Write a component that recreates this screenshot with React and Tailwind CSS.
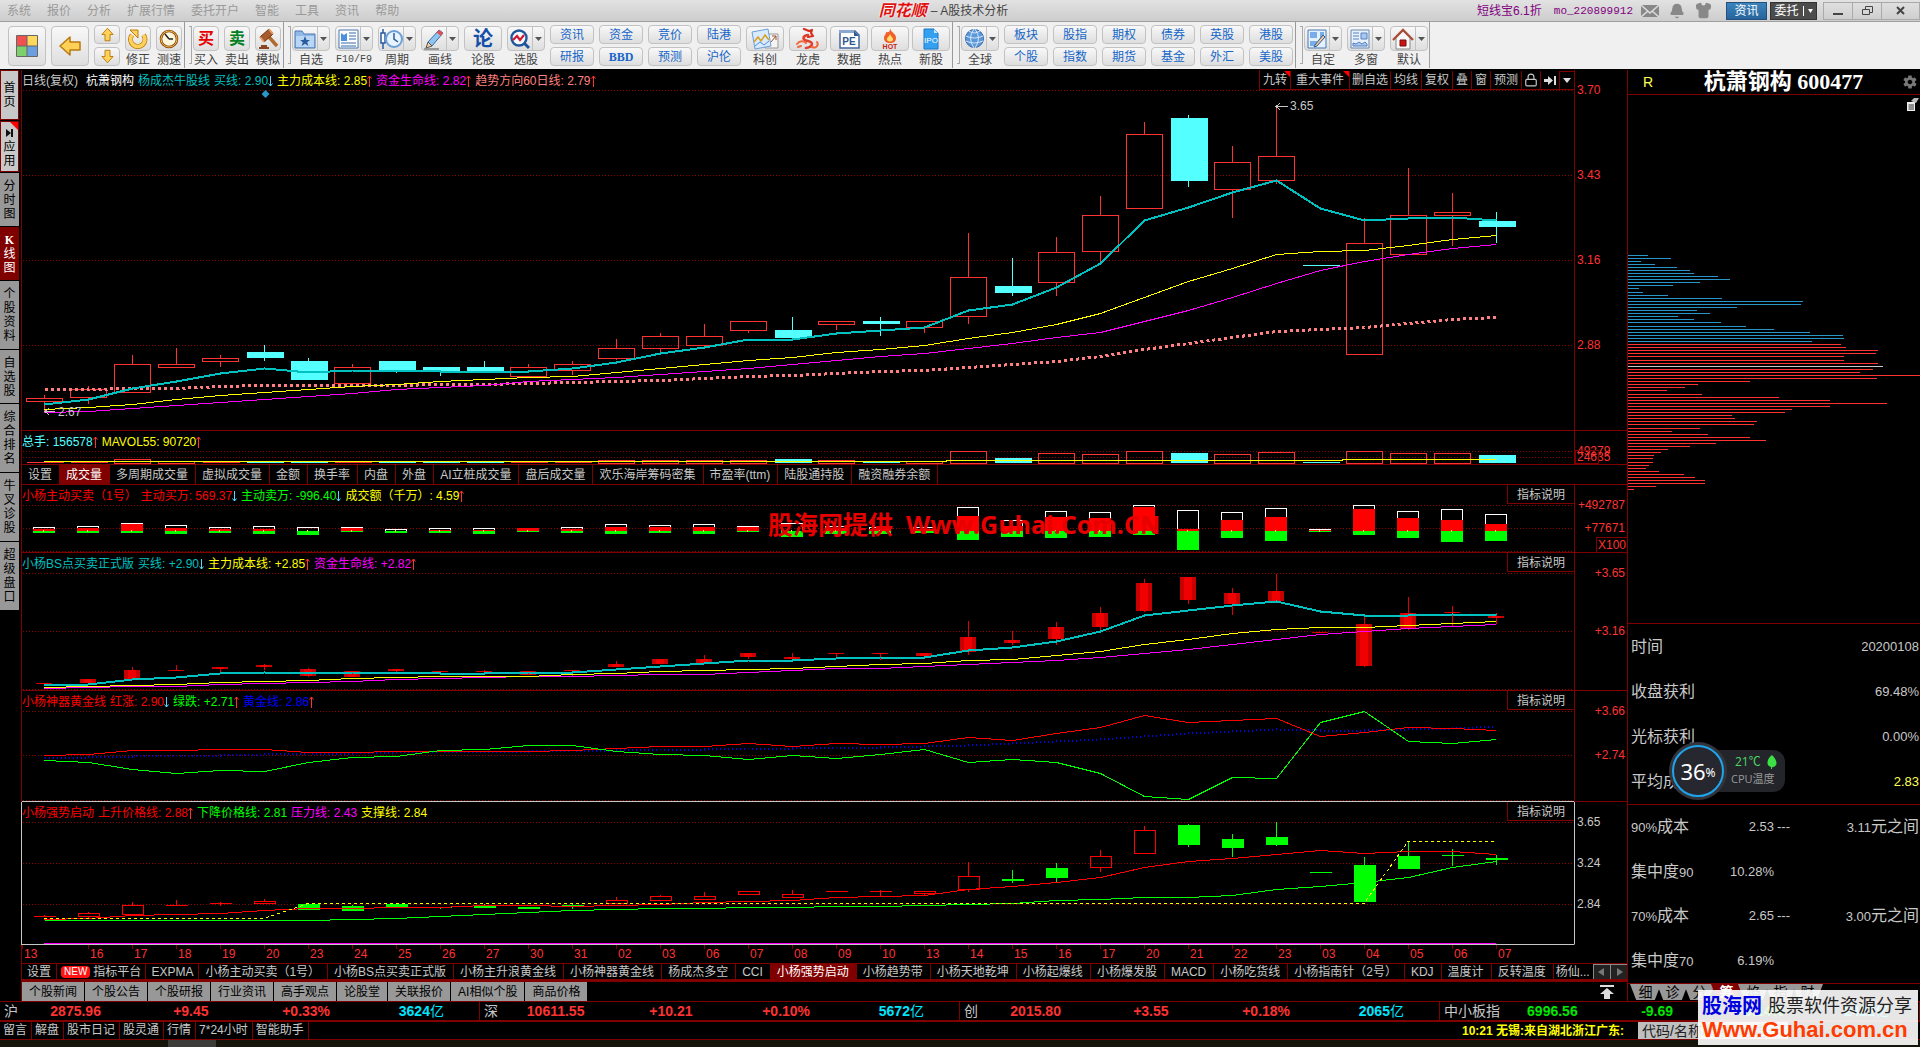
import { Bell, Lock, Shirt } from "lucide-react";
import { IoMdSettings } from "react-icons/io";

const STEP = 44;
const FIRST_X = 44.5;
const PLOT_LEFT = 22;
const PLOT_WIDTH = 1552;

const xAt = (i) => FIRST_X + i * STEP;
const leftPercent = (x) => `${((x - PLOT_LEFT) / PLOT_WIDTH) * 100}%`;

const dates = "13 16 17 18 19 20 23 24 25 26 27 30 31 02 03 06 07 08 09 10 13 14 15 16 17 20 21 22 23 03 04 05 06 07".split(" ");

// [direction, top, bottom, high, low]
const mainCandles = [
  ["up", 398, 401, 395, 412], ["up", 389, 397, 386, 404], ["up", 364, 392, 355, 392], ["up", 364, 367, 348, 367],
  ["up", 358, 361, 355, 367], ["down", 352, 358, 345, 361], ["down", 361, 380, 358, 380], ["up", 367, 383, 364, 383],
  ["down", 361, 370, 361, 373], ["down", 367, 371, 367, 376], ["down", 367, 373, 361, 373], ["up", 367, 376, 364, 376],
  ["up", 364, 370, 361, 375], ["up", 348, 358, 339, 360], ["up", 336, 348, 333, 352], ["up", 336, 345, 324, 345],
  ["up", 321, 330, 321, 333], ["down", 330, 338, 317, 338], ["up", 321, 324, 321, 330], ["down", 321, 324, 317, 336],
  ["up", 321, 327, 321, 333], ["up", 277, 316, 233, 324], ["down", 286, 293, 258, 296], ["up", 252, 282, 237, 296],
  ["up", 215, 251, 196, 263], ["up", 134, 208, 122, 208], ["down", 118, 181, 115, 187], ["up", 162, 189, 146, 218],
  ["up", 156, 180, 106, 184], ["down", 265, 266, 265, 266], ["up", 243, 354, 218, 354], ["up", 215, 254, 168, 254],
  ["up", 212, 215, 193, 246], ["down", 221, 227, 212, 243],
];
const buyLine = [404, 399, 388, 381, 373, 368, 372, 370, 370, 371, 371, 371, 368, 362, 353, 347, 339, 339, 333, 330, 327, 310, 304, 287, 263, 220, 207, 192, 180, 208, 220, 218, 217, 220];
const costLine = [409, 407, 404, 399, 395, 392, 389, 386, 384, 381, 379, 377, 376, 372, 368, 364, 360, 357, 352, 349, 345, 338, 332, 324, 313, 297, 281, 268, 254, 251, 250, 245, 239, 235];
const lifeLine = [412, 411, 408, 405, 402, 399, 396, 393, 389, 387, 385, 381, 379, 377, 374, 371, 368, 364, 360, 356, 353, 348, 343, 337, 332, 321, 310, 297, 283, 270, 261, 254, 248, 244];
const trendLine = [389, 389, 388, 388, 386, 385, 385, 385, 385, 384, 384, 383, 382, 381, 380, 378, 376, 375, 373, 371, 370, 367, 364, 361, 356, 349, 343, 337, 331, 329, 327, 323, 319, 317];

const volumeTops = [462, 462, 459, 461, 462, 462, 462, 462, 462, 462, 462, 462, 462, 460, 460, 460, 460, 459, 460, 462, 461, 451, 458, 453, 454, 451, 453, 454, 452, 462, 451, 453, 453, 455];

// [outline top, red top, green bottom]
const tradeBars = [
  [527, 529, 533], [526, 528, 533], [523, 524, 533], [525, 528, 534], [527, 529, 533], [526, 529, 534], [527, 531, 535],
  [527, 528, 532], [529, 531, 533], [528, 530, 533], [528, 530, 534], [528, 528, 532], [527, 529, 533], [524, 527, 534],
  [525, 527, 533], [524, 527, 534], [526, 527, 532], [523, 531, 537], [526, 528, 534], [527, 529, 534], [527, 529, 533],
  [507, 516, 540], [520, 526, 537], [511, 517, 538], [512, 518, 537], [505, 507, 535], [510, 529, 550], [512, 520, 538],
  [508, 517, 541], [529, 530, 532], [505, 509, 535], [511, 518, 538], [509, 520, 542], [514, 524, 541],
];

// [top, bottom, high, low]
const bsCandles = [
  [683, 684, 683, 684], [679, 683, 679, 683], [670, 679, 667, 679], [670, 671, 665, 671], [667, 669, 667, 673],
  [665, 667, 664, 670], [669, 676, 668, 677], [671, 677, 671, 677], [669, 671, 669, 674], [671, 672, 671, 675],
  [671, 672, 670, 672], [671, 675, 671, 675], [670, 671, 670, 676], [664, 667, 661, 667], [659, 664, 659, 664],
  [659, 663, 655, 663], [653, 657, 653, 659], [657, 659, 653, 659], [653, 654, 653, 658], [653, 654, 653, 660],
  [653, 656, 653, 659], [637, 652, 621, 655], [640, 643, 631, 645], [627, 639, 622, 645], [613, 627, 607, 630],
  [583, 611, 579, 612], [577, 600, 577, 604], [593, 604, 588, 615], [591, 601, 574, 601], [632, 633, 632, 633],
  [624, 666, 616, 667], [613, 629, 597, 630], [612, 613, 606, 626], [616, 618, 613, 624],
];
const bsBuy = [685, 684, 679, 677, 673, 672, 673, 672, 672, 673, 673, 672, 672, 669, 666, 663, 660, 660, 658, 657, 657, 650, 647, 641, 631, 615, 610, 605, 601, 611, 615, 615, 614, 615];
const bsCost = [687, 686, 685, 684, 682, 681, 680, 678, 677, 676, 676, 676, 674, 673, 671, 670, 669, 668, 666, 664, 663, 660, 659, 655, 651, 644, 639, 633, 629, 627, 627, 625, 623, 621];
const bsLife = [688, 687, 686, 686, 684, 683, 682, 681, 679, 678, 677, 676, 676, 675, 674, 674, 672, 670, 668, 668, 666, 664, 662, 660, 657, 653, 649, 644, 639, 634, 631, 628, 626, 624];

const goldRed = [755, 754, 750, 750, 749, 749, 752, 752, 751, 751, 751, 751, 750, 748, 746, 746, 743, 746, 743, 744, 743, 737, 740, 733, 727, 715, 722, 720, 718, 736, 732, 727, 728, 730];
const goldGreen = [760, 762, 769, 773, 770, 771, 762, 757, 756, 750, 749, 745, 745, 751, 754, 755, 759, 755, 758, 754, 749, 762, 759, 762, 773, 796, 799, 777, 778, 722, 711, 741, 743, 739];
const goldBlue = [757, 757, 756, 755, 755, 754, 753, 753, 752, 751, 751, 751, 750, 750, 749, 749, 748, 748, 747, 747, 746, 745, 743, 741, 739, 736, 733, 731, 729, 730, 730, 729, 728, 726];

const strongCandles = [
  ["up", 916, 917, 915, 917], ["up", 913, 916, 912, 918], ["up", 905, 914, 902, 914], ["up", 905, 906, 900, 906],
  ["up", 903, 904, 902, 906], ["up", 901, 903, 899, 903], ["down", 904, 910, 904, 910], ["down", 906, 911, 905, 911],
  ["down", 904, 907, 904, 907], ["down", 907, 908, 907, 909], ["down", 906, 908, 904, 908], ["down", 907, 909, 907, 909],
  ["down", 905, 906, 903, 909], ["up", 900, 903, 897, 903], ["up", 896, 900, 895, 901], ["up", 896, 899, 892, 899],
  ["up", 891, 894, 891, 895], ["up", 894, 897, 890, 897], ["up", 891, 892, 891, 892], ["up", 891, 892, 890, 896],
  ["up", 891, 893, 891, 895], ["up", 876, 889, 862, 892], ["down", 879, 881, 870, 883], ["down", 868, 878, 863, 882],
  ["up", 856, 867, 850, 872], ["up", 830, 853, 826, 853], ["down", 825, 845, 824, 847], ["down", 839, 848, 834, 857],
  ["down", 837, 845, 822, 846], ["down", 872, 873, 872, 873], ["down", 865, 902, 857, 902], ["down", 856, 869, 841, 869],
  ["down", 855, 856, 849, 866], ["down", 858, 860, 855, 865],
];
const riseLine = [919, 918, 915, 914, 913, 910, 908, 908, 907, 907, 905, 905, 906, 905, 904, 902, 901, 900, 897, 896, 895, 889, 886, 882, 877, 867, 861, 858, 854, 850, 853, 851, 851, 854];
const fallLine = [920, 920, 920, 920, 920, 920, 920, 919, 918, 916, 914, 912, 910, 909, 908, 908, 907, 907, 906, 906, 905, 904, 903, 900, 899, 897, 897, 895, 889, 886, 882, 877, 867, 861];

const chips = [
  20, 43, 13, 27, 49, 62, 66, 90, 102, 72, 45, 11, 15, 40, 94, 175, 173, 109, 69, 82, 50, 66, 93, 118, 146, 182, 215, 216, 184,
  213, 218, 250, 248, 216, 216, 250, 255, 245, 232, 292, 249, 122, 70, 57, 39, 74, 151, 202, 259, 202, 164, 157, 104, 107, 129,
  126, 72, 44, 80, 122, 138, 88, 62, 40, 33, 26, 25, 25, 21, 18, 31, 56, 67, 77, 77, 28, 6,
];

const menus = ["系统", "报价", "分析", "扩展行情", "委托开户", "智能", "工具", "资讯", "帮助"];
const sideTabs = ["首页", "应用", "分时图", "K线图", "个股资料", "自选股", "综合排名", "牛叉诊股", "超级盘口"];
const volumeTabs = ["设置", "成交量", "多周期成交量", "虚拟成交量", "金额", "换手率", "内盘", "外盘", "AI立桩成交量", "盘后成交量", "欢乐海岸筹码密集", "市盈率(ttm)", "陆股通持股", "融资融券余额"];
const indicatorTabs = ["EXPMA", "小杨主动买卖（1号）", "小杨BS点买卖正式版", "小杨主升浪黄金线", "小杨神器黄金线", "杨成杰多空", "CCI", "小杨强势启动", "小杨趋势带", "小杨天地乾坤", "小杨起爆线", "小杨爆发股", "MACD", "小杨吃货线", "小杨指南针（2号）", "KDJ", "温度计", "反转温度"];
const newsTabs = ["个股新闻", "个股公告", "个股研报", "行业资讯", "高手观点", "论股堂", "关联报价", "AI相似个股", "商品价格"];
const footerLinks = ["留言", "解盘", "股市日记", "股灵通", "行情", "7*24小时", "智能助手"];

const indexes = [
  { name: "沪", value: "2875.96", change: "+9.45", percent: "+0.33%", amount: "3624亿" },
  { name: "深", value: "10611.55", change: "+10.21", percent: "+0.10%", amount: "5672亿" },
  { name: "创", value: "2015.80", change: "+3.55", percent: "+0.18%", amount: "2065亿" },
  { name: "中小板指", value: "6996.56", change: "-9.69", percent: "-0.14%", amount: "2422亿", down: true },
];

function Arrow({ up }) {
  return up ? (
    <svg width="5" height="12" viewBox="0 0 5 12" className="shrink-0">
      <path d="M2.5 12V1M0.5 3.5L2.5 1L4.5 3.5" stroke="#ff3232" fill="none" />
    </svg>
  ) : (
    <svg width="5" height="12" viewBox="0 0 5 12" className="shrink-0">
      <path d="M2.5 1V11M0.5 8.5L2.5 11L4.5 8.5" stroke="#54d8ff" fill="none" />
    </svg>
  );
}

function Legend({ items, children }) {
  return (
    <div className="flex h-5 items-start justify-between">
      <div className="flex h-5 items-center gap-1 whitespace-nowrap pt-0.5">
        {items.map(([text, color, arrow]) => (
          <span key={text} className={`flex items-center ${color}`}>
            {text}
            {arrow && <Arrow up={arrow === "up"} />}
          </span>
        ))}
      </div>
      {children}
    </div>
  );
}

function HelpButton() {
  return (
    <button className="h-[19px] w-[67px] border-b border-l border-[#800000] pt-0.5 leading-4 text-[#c8c8c8]">指标说明</button>
  );
}

function Plot({ top, height, grid, children }) {
  return (
    <svg
      viewBox={`${PLOT_LEFT} ${top} ${PLOT_WIDTH} ${height}`}
      height={height}
      preserveAspectRatio="none"
      className="block w-full"
      shapeRendering="crispEdges"
    >
      {grid.map((y) => (
        <line key={y} x1="23" x2="1574" y1={y + 0.5} y2={y + 0.5} stroke="#900000" strokeDasharray="1 2" />
      ))}
      {children}
    </svg>
  );
}

function Line({ data, color, width = 1, dash }) {
  const points = data.map((y, i) => `${xAt(i)},${y + 0.5}`).join(" ");
  return <polyline points={points} fill="none" stroke={color} strokeWidth={width} strokeDasharray={dash} />;
}

function Candles({ data, width, upColor, downColor }) {
  return data.map(([dir, top, bottom, high, low], i) => {
    const x = xAt(i);
    const color = dir === "up" ? upColor : downColor;
    return (
      <g key={i} stroke={color}>
        {high < top && <line x1={x} x2={x} y1={high} y2={top} />}
        {low > bottom && <line x1={x} x2={x} y1={bottom} y2={low} />}
        {dir === "up" && bottom - top > 1 ? (
          <rect x={x - width / 2} y={top + 0.5} width={width} height={bottom - top - 0.5} fill="none" />
        ) : (
          <rect x={x - width / 2} y={top} width={width + 1} height={bottom - top} fill={color} stroke="none" />
        )}
      </g>
    );
  });
}

function Panel({ labels = [], pitch = "", align = "text-left", edge = "border-[#800000]", bottom = "border-[#800000]", tone = "text-[#ff3232]", extra, children }) {
  return (
    <section className="flex">
      <div className={`relative min-w-0 flex-1 border-b border-l ${edge} ${bottom}`}>{children}</div>
      <div className={`relative w-[53px] border-b border-l pt-3 ${edge} ${bottom} ${align} ${tone}`}>
        {labels.map((label) => (
          <div key={label} className={`px-0.5 leading-4 ${pitch}`}>{label}</div>
        ))}
        {extra}
      </div>
    </section>
  );
}

function SmallTab({ label, active, compact }) {
  return (
    <button
      className={`shrink-0 whitespace-nowrap border-r border-[#800000] ${compact ? "px-[5px]" : "pl-1.5 pr-[7px]"} ${active ? "bg-[#800000] text-white" : "text-[#c8c8c8]"}`}
    >
      {label}
    </button>
  );
}

const raised = "rounded-sm border border-[#c2c2c2] bg-linear-to-b from-[#f8f8f8] to-[#dedede]";

function Tool({ label, menu, narrow, mono, children }) {
  return (
    <div className="flex flex-col items-center">
      <button aria-label={label} className={`flex h-[25px] ${narrow ? "w-[26px]" : "w-[38px]"} ${raised}`}>
        <span className="flex h-full flex-1 items-center justify-center">{children}</span>
        {menu && (
          <span className="flex h-full w-3 items-center justify-center border-l border-[#c2c2c2]">
            <svg width="7" height="4"><path d="M0 0H7L3.5 4Z" fill="#555" /></svg>
          </span>
        )}
      </button>
      <span className={`whitespace-nowrap leading-[18px] text-[#444] ${mono ? "font-['Liberation_Mono',monospace] text-[10px]" : ""}`}>{label}</span>
    </div>
  );
}

function Pair({ top, bottom }) {
  return (
    <div className="-mt-px flex flex-col gap-[3px] text-[#1666c8]">
      <button className={`h-[19px] w-11 leading-4 ${raised}`}>{top}</button>
      <button className={`h-[19px] w-11 leading-4 ${raised}`}>{bottom}</button>
    </div>
  );
}

function Divider() {
  return (
    <div className="-mx-[3px] -mt-1 h-[46px] w-[7px] border-l border-[#999] py-1 pl-1">
      <div className="h-full w-[3px] border border-l-0 border-[#a8a8a8]" />
    </div>
  );
}

function YellowArrow({ size, className = "" }) {
  return (
    <svg width={size} height={size} viewBox="0 0 24 24" className={className}>
      <path d="M2 12L12 3V8H22V16H12V21Z" fill="#ffd257" stroke="#b87a10" strokeWidth="1.5" strokeLinejoin="round" />
    </svg>
  );
}

function MagnifierIcon() {
  return (
    <svg width="22" height="22" viewBox="0 0 22 22" fill="none">
      <circle cx="10" cy="10" r="7.5" stroke="#20569c" strokeWidth="2.4" fill="#f4faff" />
      <path d="M15.5 15.5L20 20" stroke="#20569c" strokeWidth="3" />
      <path d="M4 12L8 8L11 12L15 7" stroke="#d01830" strokeWidth="2.2" />
    </svg>
  );
}

function Toolbar() {
  return (
    <div className="flex h-12 items-start gap-[5px] overflow-hidden border-t border-[#a0a0a0] bg-[#f0f0f0] pl-[9px] pt-1">
      <button aria-label="首页" className={`-ml-px flex h-10 w-[38px] items-center justify-center ${raised}`}>
        <svg width="22" height="22" viewBox="0 0 22 22">
          <path d="M1 1H11V11H1Z" fill="#f05050" /><path d="M11 1H21V11H11Z" fill="#ffd95c" />
          <path d="M1 11H11V21H1Z" fill="#7ed06c" /><path d="M11 11H21V21H11Z" fill="#6c9fe0" />
          <path d="M.5 .5H21.5V21.5H.5ZM11 0V22M0 11H22" fill="none" stroke="#666" />
        </svg>
      </button>
      <button aria-label="后退" className={`flex h-10 w-[38px] items-center justify-center ${raised}`}>
        <YellowArrow size={24} />
      </button>
      <div className="-mt-px flex flex-col gap-[3px]">
        <button aria-label="上一个" className={`flex h-[19px] w-[26px] items-center justify-center ${raised}`}><YellowArrow size={15} className="rotate-90" /></button>
        <button aria-label="下一个" className={`flex h-[19px] w-[26px] items-center justify-center ${raised}`}><YellowArrow size={15} className="-rotate-90" /></button>
      </div>
      <Tool label="修正" narrow>
        <svg width="20" height="20" viewBox="0 0 20 20" fill="none">
          <path d="M4 6A7.2 7.2 0 1 0 15.5 6" stroke="#b87a10" strokeWidth="5" />
          <path d="M4 6A7.2 7.2 0 1 0 15.5 6" stroke="#ffd257" strokeWidth="3.5" />
          <path d="M2 1H10V9Z" fill="#ffd257" stroke="#b87a10" />
        </svg>
      </Tool>
      <Tool label="测速" narrow>
        <svg width="20" height="20" viewBox="0 0 20 20">
          <circle cx="10" cy="10" r="8" fill="#fff7dc" stroke="#8a4a12" strokeWidth="2.6" />
          <circle cx="10" cy="10" r="8" fill="none" stroke="#efb44a" />
          <path d="M10 10L6 5M10 10H14" stroke="#222" strokeWidth="1.5" />
        </svg>
      </Tool>
      <Divider />
      <Tool label="买入" narrow><b className="text-base leading-5 text-[#e60000]">买</b></Tool>
      <Tool label="卖出" narrow><b className="text-base leading-5 text-[#008020]">卖</b></Tool>
      <Tool label="模拟" narrow>
        <svg width="22" height="22" viewBox="0 0 22 22">
          <path d="M12 9L20 18" stroke="#b06a30" strokeWidth="3.4" />
          <path d="M3 9L12 1L16 6L7 14Z" fill="#a85a2c" stroke="#6a3212" />
          <path d="M3 9L7 14M12 1L16 6" stroke="#e0a070" strokeWidth="2" />
          <path d="M2 20H12M4 18H10" stroke="#8a4520" strokeWidth="2" />
        </svg>
      </Tool>
      <Divider />
      <Tool label="自选" menu>
        <svg width="22" height="20" viewBox="0 0 22 20">
          <path d="M1 2H8L10 5H21V19H1Z" fill="#8fb9e8" stroke="#4a78b0" />
          <path d="M2 7H20V18H2Z" fill="#b9d7f5" />
          <path d="M11 7L12.5 11H16L13.2 13.2L14.4 17L11 14.8L7.6 17L8.8 13.2L6 11H9.5Z" fill="#285c9c" />
        </svg>
      </Tool>
      <Tool label="F10/F9" menu mono>
        <svg width="21" height="20" viewBox="0 0 21 20">
          <path d="M1 1H20V19H1Z" fill="#fff" stroke="#4a78b0" />
          <path d="M3 4L6 6L9 4V12H3Z" fill="#4c8fdc" /><path d="M11 4H18M11 7H18M11 10H18M3 14H18M3 17H18" stroke="#7b9cc8" strokeWidth="1.5" />
        </svg>
      </Tool>
      <Tool label="周期" menu>
        <svg width="23" height="22" viewBox="0 0 23 22">
          <path d="M3 1V21" stroke="#285c9c" strokeWidth="1.5" /><path d="M1 5H5V15H1Z" fill="#fff" stroke="#285c9c" strokeWidth="1.5" />
          <circle cx="14" cy="11" r="8" fill="#e8f3ff" stroke="#6c9fd8" strokeWidth="2" />
          <path d="M14 5V11L18 14" stroke="#285c9c" strokeWidth="1.5" fill="none" />
        </svg>
      </Tool>
      <Tool label="画线" menu>
        <svg width="22" height="22" viewBox="0 0 22 22">
          <path d="M5 14L16 2L20 5L9 18Z" fill="#8fc4ee" stroke="#3a6ca8" />
          <path d="M16 2L20 5L18 8L13.5 4.5Z" fill="#e05050" /><path d="M5 14L9 18L3 20Z" fill="#f0d0a0" stroke="#555" />
          <path d="M1 21H16" stroke="#555" />
        </svg>
      </Tool>
      <Tool label="论股"><b className="text-xl leading-5 text-[#1450a8]">论</b></Tool>
      <Tool label="选股" menu><MagnifierIcon /></Tool>
      <Pair top="资讯" bottom="研报" />
      <Pair top="资金" bottom={<b className="font-['Liberation_Serif']">BBD</b>} />
      <Pair top="竞价" bottom="预测" />
      <Pair top="陆港" bottom="沪伦" />
      <Tool label="科创">
        <svg width="28" height="22" viewBox="0 0 28 22">
          <path d="M14 6H27V20H14Z" fill="#f4f4f4" stroke="#999" /><path d="M20 14L25 8M21 8H25V12" stroke="#a05030" fill="none" />
          <path d="M1 4L17 1L20 18L4 21Z" fill="#d8eafc" stroke="#6c9fd8" />
          <path d="M3 14L7 9L10 13L14 7L18 12" stroke="#d8a020" strokeWidth="1.5" fill="none" /><path d="M4 18L9 14L13 17L18 13" stroke="#4c8fdc" fill="none" />
        </svg>
      </Tool>
      <div className="flex gap-[3px]">
        <Tool label="龙虎">
          <svg width="24" height="22" viewBox="0 0 24 22" fill="none" strokeLinecap="round">
            <path d="M8 1L13 3L16 2L15 5L17 8L12 9" stroke="#d83020" strokeWidth="2.2" strokeLinejoin="round" />
            <path d="M12 7C6 8 6 12 12 13C18 14 17 19 10 20" stroke="#e0402c" strokeWidth="2.6" />
            <path d="M1 16C4 12 8 13 10 15M16 19C20 21 23 17 21 14M2 19L5 18" stroke="#f0683c" strokeWidth="2" />
          </svg>
        </Tool>
        <Tool label="数据">
          <svg width="24" height="20" viewBox="0 0 24 20">
            <path d="M3 2H18L22 6V19H3Z" fill="#fff" stroke="#4468a0" strokeWidth="1.5" /><path d="M2 1H17V4H2Z" fill="#8ca8d0" /><path d="M17 2L22 7H17Z" fill="#305890" />
            <text x="12" y="16" textAnchor="middle" fontSize="10" fontWeight="bold" fill="#305890">PE</text>
          </svg>
        </Tool>
        <Tool label="热点">
          <svg width="24" height="22" viewBox="0 0 24 22">
            <path d="M12 0C13 5 18 5 18 10C18 13 16 15 12 15C8 15 6 13 6 10C6 7 8 7 8 4C11 5 12 4 12 0Z" fill="#f06028" />
            <path d="M12 6C13 9 15 9 15 11.5C15 14 9 14 9 11.5C9 9 11 9 12 6Z" fill="#ffe070" />
            <text x="12" y="21" textAnchor="middle" fontSize="7" fontWeight="bold" fill="#c82010">HOT</text>
          </svg>
        </Tool>
        <Tool label="新股">
          <svg width="18" height="22" viewBox="0 0 18 22">
            <path d="M2 1H12L16 5V21H2Z" fill="#36a0f0" stroke="#1878c8" /><path d="M12 1V5H16Z" fill="#c8e8ff" />
            <text x="9" y="15" textAnchor="middle" fontSize="8" fill="#fff">IPO</text>
          </svg>
        </Tool>
      </div>
      <Divider />
      <Tool label="全球" menu>
        <svg width="21" height="21" viewBox="0 0 21 21" fill="none">
          <circle cx="10.5" cy="10.5" r="9" fill="#5c98d8" stroke="#3468a8" />
          <path d="M2 8Q10 12 19 8M2 13Q10 17 19 13M5 3Q10 7 16 3M10 1Q3 10 10 20M11 1Q18 10 11 20" stroke="#d4e8fc" />
        </svg>
      </Tool>
      <Pair top="板块" bottom="个股" />
      <Pair top="股指" bottom="指数" />
      <Pair top="期权" bottom="期货" />
      <Pair top="债券" bottom="基金" />
      <Pair top="英股" bottom="外汇" />
      <Pair top="港股" bottom="美股" />
      <Divider />
      <Tool label="自定" menu>
        <svg width="20" height="20" viewBox="0 0 20 20">
          <path d="M1 1H19V19H1Z" fill="#e4f0fc" stroke="#4a78b0" /><path d="M3 3H10V9H3ZM3 12H10V17H3ZM13 3H17V9H13Z" fill="#78acea" />
          <path d="M8 16L16 6L18 8L10 17L7 18Z" fill="#f0c890" stroke="#2c5a98" />
        </svg>
      </Tool>
      <Tool label="多窗" menu>
        <svg width="20" height="20" viewBox="0 0 20 20" fill="none">
          <path d="M1 1H19V19H1Z" fill="#e8f2fc" stroke="#6c88b0" />
          <path d="M3 4H9M3 7H9M3 10H9" stroke="#5880c0" /><path d="M11 4H17V10H11Z" fill="#a8c8f0" stroke="#5880c0" />
          <path d="M3 17V14L6 15L9 13L12 15L15 13L17 15V17Z" fill="#a8c8f0" stroke="#5880c0" />
        </svg>
      </Tool>
      <Tool label="默认" menu>
        <svg width="22" height="22" viewBox="0 0 22 22">
          <path d="M4 10V21H18V10L11 3Z" fill="#f8f8f8" stroke="#888" /><path d="M1 12L11 2L21 12" fill="none" stroke="#a85038" strokeWidth="2.4" />
          <path d="M8 12H14V18H8Z" fill="#d01010" stroke="#701010" />
        </svg>
      </Tool>
      <div className="-ml-1 -mt-1 h-[46px] border-l border-[#a0a0a0]" />
    </div>
  );
}

function TitleBar() {
  return (
    <header className="flex h-[21px] items-center bg-linear-to-b from-[#e2e2e2] to-[#cdcdcd]">
      <nav className="flex flex-1 gap-4 pl-[7px] text-[#999]">
        {menus.map((menu) => <button key={menu}>{menu}</button>)}
      </nav>
      <div className="mr-10 flex items-center gap-1 text-[#444]">
        <b className="text-base italic leading-4 text-[#e01010] [text-shadow:0_0_2px_#fff,0_0_2px_#fff]">同花顺</b>
        <span>– A股技术分析</span>
      </div>
      <div className="flex flex-1 items-center justify-end text-[#800080]">
        <a href="#promo" className="mr-3">短线宝6.1折</a>
        <a href="#user" className="mr-2 font-['Liberation_Mono',monospace] text-[11px]">mo_220899912</a>
        <svg width="18" height="14" viewBox="0 0 18 14" className="mr-2.5">
          <path d="M0 1H18V13H0Z" fill="#888" />
          <path d="M0 1L9 9L18 1M0 13L7 7M18 13L11 7" stroke="#ddd" strokeWidth="1.5" fill="none" />
        </svg>
        <Bell size={16} className="mr-2.5 fill-[#888] text-[#888]" />
        <Shirt size={17} className="mr-3.5 fill-[#888] text-[#888]" />
        <button className="mr-[3px] h-[18px] w-[41px] border border-[#24507c] bg-linear-to-b from-[#3c84bc] to-[#28649c] leading-4 text-white">资讯</button>
        <button className="mr-1.5 flex h-[18px] w-[47px] items-center justify-center gap-1 border border-[#333] bg-[#4c4c4c] leading-4 text-white">
          委托
          <span className="h-2.5 border-l border-white" />
          <svg width="5" height="4"><path d="M0 0H5L2.5 4Z" fill="#fff" /></svg>
        </button>
        <button aria-label="最小化" className="flex h-[18px] w-[30px] items-end justify-center border border-[#aaa] pb-1"><span className="h-0.5 w-2.5 bg-[#444]" /></button>
        <button aria-label="还原" className="flex h-[18px] w-[29px] items-center justify-center border-y border-r border-[#aaa]">
          <svg width="11" height="9" fill="none" stroke="#444"><path d="M3.5 3V.5H10.5V6.5H8M.5 3.5H7.5V8.5H.5Z" /></svg>
        </button>
        <button aria-label="关闭" className="flex h-[18px] w-[38px] items-center justify-center border-y border-r border-[#aaa]">
          <svg width="9" height="9" stroke="#444" strokeWidth="2"><path d="M1 1L8 8M8 1L1 8" /></svg>
        </button>
      </div>
    </header>
  );
}

function SideBar() {
  return (
    <nav className="flex w-[21px] shrink-0 flex-col gap-px bg-black pr-0.5">
      {sideTabs.map((tab, i) => {
        const look = tab === "K线图" ? "bg-[#800000] text-white border-[#800000]" : i < 2 ? "bg-[#c8c8c8] text-black border-[#800000]" : "bg-[#989898] text-black border-[#989898]";
        const pad = i === 0 ? "py-2.5" : i === 1 ? "pb-[3px] pt-1" : tab.length === 3 ? "pb-1 pt-[5px]" : "py-[5px]";
        return (
          <button key={tab} className={`relative flex flex-col items-center border px-0.5 leading-[14px] ${pad} ${look}`}>
            {tab === "应用" && (
              <>
                <svg width="19" height="14" viewBox="0 0 19 14"><path d="M6 3L11 7L6 11ZM11 3H13V11H11Z" fill="#111" /></svg>
                <svg width="8" height="8" className="absolute right-0 top-0"><path d="M0 0H8V8Z" fill="red" /></svg>
              </>
            )}
            {tab.split("").map((char) => <span key={char} className={char === "K" ? "font-['Liberation_Serif'] font-bold" : ""}>{char}</span>)}
          </button>
        );
      })}
    </nav>
  );
}

function ChartTools() {
  const tools = [["九转", true], ["重大事件", true], ["删自选"], ["均线"], ["复权"], ["叠"], ["窗"], ["预测"]];
  return (
    <div className="flex h-5 border-b border-l border-[#800000] pt-px text-[#c8c8c8]">
      {tools.map(([label, hot]) => (
        <button key={label} className={`relative whitespace-nowrap border-r border-[#800000] ${label === "重大事件" ? "px-[5px]" : label.length === 3 ? "px-0.5" : "px-[3px]"}`}>
          {label}
          {hot && <svg width="6" height="6" className="absolute right-0 top-0"><path d="M0 0H6V6Z" fill="red" /></svg>}
        </button>
      ))}
      <button aria-label="锁定" className="flex w-[19px] items-center justify-center border-r border-[#800000]"><Lock size={14} /></button>
      <button aria-label="跳到最新" className="flex w-[19px] items-center justify-center border-r border-[#800000]">
        <svg width="13" height="11"><path d="M0 4H4V1L9 5.5L4 10V7H0ZM10 1H12V10H10Z" fill="#ddd" /></svg>
      </button>
      <button aria-label="更多" className="flex w-[14px] items-center justify-center border-t border-[#800000]">
        <svg width="8" height="5"><path d="M0 0H8L4 5Z" fill="#ddd" /></svg>
      </button>
    </div>
  );
}

function MainPanel() {
  return (
    <Panel labels={["3.70", "3.43", "3.16", "2.88"]} pitch="h-[85px]">
      <Legend
        items={[
          ["日线(复权)", "text-[#c8c8c8] mr-1"],
          ["杭萧钢构", "text-white"],
          ["杨成杰牛股线", "text-[#00c0c0]"],
          ["买线: 2.90", "text-[#00c0c0]", "down"],
          ["主力成本线: 2.85", "text-[#ffff00]", "up"],
          ["资金生命线: 2.82", "text-[#ff00ff]", "up"],
          ["趋势方向60日线: 2.79", "text-[#ff8080]", "up"],
        ]}
      >
        <ChartTools />
      </Legend>
      <Plot top={90} height={340} grid={[90, 175, 260, 345]}>
        <path d="M265.5 90L269.5 94L265.5 98L261.5 94Z" fill="#2896c8" shapeRendering="auto" />
        <Candles data={mainCandles} width={36} upColor="#ff3232" downColor="#54ffff" />
        <Line data={trendLine} color="#ff8080" width={3} dash="3 3" />
        <Line data={costLine} color="#ffff00" />
        <Line data={lifeLine} color="#ff00ff" />
        <Line data={buyLine} color="#00c0c0" width={2} />
        <path d="M1276 106.5H1288M1280 103.5L1276 106.5L1280 109.5M45 411.5H55M49 408.5L45 411.5L49 414.5" fill="none" stroke="#c8c8c8" />
      </Plot>
      <span className="absolute top-7 leading-4 text-[#c8c8c8]" style={{ left: leftPercent(1290) }}>3.65</span>
      <span className="absolute bottom-2.5 leading-4 text-[#c8c8c8]" style={{ left: leftPercent(58) }}>2.67</span>
    </Panel>
  );
}

function VolumePanel() {
  return (
    <Panel labels={["49279", "24635"]} pitch="h-1.5" extra={<span className="absolute bottom-0 left-0 h-3.5 w-6 border border-[#800000]" />}>
      <div className="-mb-px">
        <Legend items={[["总手: 156578", "text-[#54ffff]", "up"], ["MAVOL55: 90720", "text-[#ffff00]", "up"]]} />
      </div>
      <Plot top={450} height={14} grid={[451, 457]}>
        <Candles data={volumeTops.map((top, i) => [mainCandles[i][0], top, 463, top, 463])} width={36} upColor="#ff3232" downColor="#54ffff" />
        <path d="M44 461.5H946V460.5H1342V459.5H1496" fill="none" stroke="#ffff00" />
      </Plot>
    </Panel>
  );
}

function TradePanel() {
  return (
    <Panel labels={["+492787", "+77671"]} pitch="h-[23px]" align="text-right" extra={<span className="absolute bottom-0 right-0 border-l border-t border-[#800000] px-px leading-[14px]">X100</span>}>
      <Legend items={[["小杨主动买卖（1号）", "text-[#ff0000]"], ["主动买万: 569.37", "text-[#ff0000]", "down"], ["主动卖万: -996.40", "text-[#00ff00]", "down"], ["成交额（千万）: 4.59", "text-[#ffff00]", "up"]]}>
        <HelpButton />
      </Legend>
      <Plot top={505} height={47} grid={[505, 528, 551]}>
        {tradeBars.map(([top, red, green], i) => (
          <g key={i}>
            <rect x={xAt(i) - 11} y={top + 0.5} width="21" height={531 - top} fill="none" stroke="#fff" />
            <rect x={xAt(i) - 11.5} y={red} width="22" height={531 - red} fill="red" />
            <rect x={xAt(i) - 11.5} y="531" width="22" height={green - 531} fill="#0f0" />
            <rect x={xAt(i) - 1.5} y="530" width="1" height="2" fill="#ff0" />
          </g>
        ))}
      </Plot>
    </Panel>
  );
}

function BsPanel() {
  return (
    <Panel labels={["+3.65", "+3.16"]} pitch="h-[58px]" align="text-right">
      <Legend items={[["小杨BS点买卖正式版", "text-[#00c0c0]"], ["买线: +2.90", "text-[#00c0c0]", "down"], ["主力成本线: +2.85", "text-[#ffff00]", "up"], ["资金生命线: +2.82", "text-[#ff00ff]", "up"]]}>
        <HelpButton />
      </Legend>
      <Plot top={573} height={117} grid={[573, 631, 689]}>
        {bsCandles.map(([top, bottom, high, low], i) => (
          <g key={i}>
            <line x1={xAt(i)} x2={xAt(i)} y1={high} y2={low} stroke="#e00000" />
            <rect x={xAt(i) - 8.5} y={top} width="16" height={bottom - top} fill="#c80000" />
            <rect x={xAt(i) - 4.5} y={top} width="8" height={bottom - top} fill="#f00000" />
          </g>
        ))}
        <Line data={bsBuy} color="#00c0c0" width={2} />
        <Line data={bsLife} color="#ff00ff" />
        <Line data={bsCost} color="#ffff00" />
      </Plot>
    </Panel>
  );
}

function GoldPanel() {
  return (
    <Panel labels={["+3.66", "+2.74"]} pitch="h-11" align="text-right">
      <Legend items={[["小杨神器黄金线", "text-[#ff0000]"], ["红涨: 2.90", "text-[#ff0000]", "down"], ["绿跌: +2.71", "text-[#00ff00]", "up"], ["黄金线: 2.86", "text-[#0000ff]", "up"]]}>
        <HelpButton />
      </Legend>
      <Plot top={711} height={90} grid={[711, 755, 800]}>
        <Line data={goldBlue} color="#0000ff" width={2} dash="1 3" />
        <Line data={goldRed} color="#ff0000" />
        <Line data={goldGreen} color="#00ff00" />
      </Plot>
    </Panel>
  );
}

function StrongPanel() {
  return (
    <Panel labels={["3.65", "3.24", "2.84"]} pitch="h-[41px]" edge="border-l-[#c8c8c8]" bottom="border-b-[#c8c8c8]" tone="border-b-transparent text-[#c8c8c8]">
      <div className="-mt-px border-t border-[#c8c8c8]">
        <Legend items={[["小杨强势启动", "text-[#ff0000]"], ["上升价格线: 2.88", "text-[#ff0000]", "up"], ["下降价格线: 2.81", "text-[#00ff00]"], ["压力线: 2.43", "text-[#ff00ff]"], ["支撑线: 2.84", "text-[#ffff00]"]]}>
          <HelpButton />
        </Legend>
      </div>
      <Plot top={822} height={122} grid={[822, 863, 904]}>
        <Candles data={strongCandles} width={21} upColor="#ff0000" downColor="#00ff00" />
        <Line data={riseLine} color="#ff0000" />
        <Line data={fallLine} color="#00ff00" />
        <path d="M44 918.5H264L308 903.5H1364L1408 841.5H1496" fill="none" stroke="#ffff00" strokeDasharray="3 3" />
        <path d="M44 943.5H1496" stroke="#ff00ff" />
      </Plot>
    </Panel>
  );
}

function DateAxis() {
  return (
    <div className="flex">
      <div className="flex h-[18px] min-w-0 flex-1 border-l border-[#800000] text-[#ff3232]">
        {dates.map((date, i) => (
          <div key={i} className={`flex min-w-0 basis-0 items-start ${i === 0 ? "grow-66" : i === 33 ? "grow-78" : "grow-44"}`}>
            <span className="h-1 w-px shrink-0 bg-[#800000]" />
            <span className="pl-px leading-[18px]">{date}</span>
          </div>
        ))}
      </div>
      <div className="w-[53px]" />
    </div>
  );
}

function StockPanel() {
  const rows = [["时间", "20200108"], ["收盘获利", "69.48%"], ["光标获利", "0.00%"], ["平均成本", "2.83"]];
  const costs = [
    { label: <><span className="text-[13px]">90%</span>成本</>, low: "2.53", high: "3.11" },
    { label: <>集中度<span className="text-[13px]">90</span></>, low: "10.28%" },
    { label: <><span className="text-[13px]">70%</span>成本</>, low: "2.65", high: "3.00" },
    { label: <>集中度<span className="text-[13px]">70</span></>, low: "6.19%" },
  ];
  return (
    <aside className="flex w-[293px] shrink-0 flex-col border-l border-[#800000] text-[#c8c8c8]">
      <div className="flex h-[25px] items-center border-b border-[#800000] pl-[15px] pr-0.5">
        <span className="text-sm text-[#ffff54]">R</span>
        <h1 className="flex-1 pl-3 text-center font-['Liberation_Serif','Noto_Sans_CJK_SC',serif] text-[22px] font-bold leading-6 text-white">杭萧钢构 600477</h1>
        <IoMdSettings size={16} className="text-[#777]" />
      </div>
      <div className="relative border-b border-[#800000]">
        <svg viewBox="0 95 292 528" height="528" preserveAspectRatio="none" className="block w-full" shapeRendering="crispEdges">
          {chips.map((length, i) => (
            <rect key={i} x="0" y={Math.floor(255 + i * 3.09)} width={length} height="1" fill={i < 29 ? "#2896c8" : i === 36 ? "#c8c8c8" : "#ff3232"} />
          ))}
        </svg>
        <svg width="14" height="14" viewBox="0 0 14 14" className="absolute right-0 top-[3px]">
          <path d="M1 4H9V13H1Z" fill="#eee" /><path d="M2.5 7H8M2.5 9H8M2.5 11H8" stroke="#333" /><path d="M5 3L8 0H13L10 5Z" fill="#bbb" />
        </svg>
      </div>
      <dl className="border-b border-[#800000] pl-[3px] pr-px">
        {rows.map(([name, value]) => (
          <div key={name} className="flex h-[45px] items-center justify-between">
            <dt className="text-base">{name}</dt>
            <dd className={`text-[13px] ${name === "平均成本" ? "text-[#ffff54]" : ""}`}>{value}</dd>
          </div>
        ))}
      </dl>
      <dl className="flex flex-1 flex-col border-b border-[#800000] pl-[3px] pr-px">
        {costs.map(({ label, low, high }, i) => (
          <div key={i} className="flex flex-1 items-center whitespace-nowrap text-[13px] leading-5">
            <dt className="w-[68px] text-base">{label}</dt>
            <dd className="w-[75px] text-right">{low}</dd>
            {high && <dd className="ml-[3px]">---</dd>}
            {high && <dd className="flex-1 text-right">{high}<span className="text-base">元之间</span></dd>}
          </div>
        ))}
      </dl>
      <div className="flex h-[17px] pl-0.5">
        {["细", "诊", "分", "筹", "焰", "指", "财"].map((tab) => (
          <button key={tab} className={`-mr-1 h-4 w-[31px] text-sm leading-4 [clip-path:polygon(0_0,100%_0,80%_100%,20%_100%)] ${tab === "筹" ? "bg-[#800000] font-bold text-white" : "bg-[#989898] text-black"}`}>{tab}</button>
        ))}
      </div>
    </aside>
  );
}

function CpuWidget() {
  return (
    <div className="absolute right-[135px] top-[742px] flex items-center">
      <div className="z-10 flex size-[58px] items-center justify-center rounded-full bg-[#33343c]">
        <div className="flex size-[52px] items-center justify-center rounded-full border-2 border-[#1ea4ea] bg-[#26272f] font-['Noto_Sans'] text-white">
          <span className="text-[22px]">36</span>
          <span className="pt-1">%</span>
        </div>
      </div>
      <div className="-ml-7 h-[42px] w-[86px] rounded-xl bg-[#24252b] pl-8 pt-1 font-['Open_Sans','Noto_Sans_CJK_SC',sans-serif] text-[11px] leading-[17px]">
        <div className="flex items-center gap-1.5 pl-1 text-[#4cd864]">
          <span className="text-xs">21℃</span>
          <svg width="10" height="14" viewBox="0 0 10 14"><path d="M5 0Q10 5 9.5 9Q8 13 5 12V14H4V12Q0 11 .5 7Q1 3 5 0Z" fill="#3ce044" /></svg>
        </div>
        <div className="whitespace-nowrap text-[#999]">CPU温度</div>
      </div>
    </div>
  );
}

function Footer() {
  return (
    <footer>
      <div className="grid h-[19px] grid-cols-4 border-t border-[#800000]">
        {indexes.map((item) => {
          const tone = item.down ? "text-[#00e600]" : "text-[#ff3232]";
          return (
            <div key={item.name} className="flex items-center border-r border-[#800000] pl-1 text-sm leading-[18px]">
              <span className="text-[#c8c8c8]">{item.name}</span>
              <div className="grid flex-1 grid-cols-4 text-center font-bold">
                <span className={tone}>{item.value}</span>
                <span className={tone}>{item.change}</span>
                <span className={tone}>{item.percent}</span>
                <span className="text-[#00e6ff]">{item.amount.slice(0, 4)}<span className="font-normal">亿</span></span>
              </div>
            </div>
          );
        })}
      </div>
      <div className="flex h-5 items-center border-b border-t-2 border-[#800000] text-[#c8c8c8]">
        {footerLinks.map((link) => (
          <a key={link} href={`#${link}`} className="h-full border-r border-[#800000] pl-[3px] pr-1 leading-[17px]">{link}</a>
        ))}
        <div className="ml-auto w-[176px] whitespace-nowrap font-bold text-[#ffff00]">10:21 无锡:来自湖北浙江广东:</div>
        <input aria-label="代码/名称" placeholder="代码/名称/简拼/功能" className="h-[17px] w-[150px] bg-[#c0c0c0] pl-1 text-sm text-black placeholder:text-[#222]" />
        <div className="w-[132px]" />
      </div>
      <div className="h-[7px] bg-[#15150c] pl-[168px]"><div className="h-full w-12 bg-[#3c3c38]" /></div>
    </footer>
  );
}

export default function App() {
  return (
    <div className="relative overflow-hidden bg-black font-['Liberation_Sans','Noto_Sans_CJK_SC',sans-serif] text-xs leading-4">
      <TitleBar />
      <Toolbar />
      <div className="flex pt-px">
        <SideBar />
        <main className="min-w-0 flex-1">
          <MainPanel />
          <VolumePanel />
          <div className="flex h-5 border-b border-l border-[#800000] leading-5">
            {volumeTabs.map((tab) => <SmallTab key={tab} label={tab} active={tab === "成交量"} />)}
          </div>
          <TradePanel />
          <BsPanel />
          <GoldPanel />
          <StrongPanel />
          <DateAxis />
          <div className="flex h-[19px] border-b-3 border-l border-t border-[#800000] leading-[14px]">
            <div className="flex min-w-0 flex-1">
              <SmallTab label="设置" compact />
              <button className="flex shrink-0 items-center border-r border-[#800000] px-1 text-[#c8c8c8]">
                <span className="mr-[3px] rounded-sm bg-[#ff1414] px-[3px] text-[10px] leading-3 text-white">NEW</span>
                指标平台
              </button>
              {indicatorTabs.map((tab) => <SmallTab key={tab} label={tab} active={tab === "小杨强势启动"} compact={tab === "EXPMA"} />)}
              <button className="shrink-0 pl-0.5 text-[#c8c8c8]">杨仙...</button>
            </div>
            {["M10 3V11L4 7Z", "M6 3V11L12 7Z"].map((d, i) => (
              <button key={d} aria-label={i ? "向右" : "向左"} className="w-[17px] border-l border-t border-[#888] bg-[#222]">
                <svg width="15" height="14"><path d={d} fill="#777" /></svg>
              </button>
            ))}
          </div>
          <div className="flex h-[19px] items-center justify-between border-l border-[#800000] pr-3">
            <div className="flex h-full gap-px">
              {newsTabs.map((tab) => <button key={tab} className="bg-[#989898] px-[7px] text-black">{tab}</button>)}
            </div>
            <svg width="16" height="14"><path d="M1 0H15V2H1ZM8 3L15 9H11V14H5V9H1Z" fill="#ddd" /></svg>
          </div>
        </main>
        <StockPanel />
      </div>
      <Footer />
      <div className="pointer-events-none absolute left-[768px] top-[508px] whitespace-pre font-['Open_Sans','Noto_Sans_CJK_SC',sans-serif] text-[25px] font-bold leading-8 text-[#e60000]">
        {"股海网提供  Www.Guhai.Com.CN"}
      </div>
      <CpuWidget />
      <div className="absolute bottom-0.5 right-0.5 h-[55px] w-[220px] bg-white/90 pl-1 pt-1">
        <div className="flex items-center gap-1.5 leading-6">
          <b className="text-xl leading-6 text-[#0000e0]">股海网</b>
          <span className="text-lg leading-6 text-[#222]">股票软件资源分享</span>
        </div>
        <a href="#guhai" className="text-[22px] font-bold leading-6 text-[#ff3c00]">Www.Guhai.com.cn</a>
      </div>
    </div>
  );
}
